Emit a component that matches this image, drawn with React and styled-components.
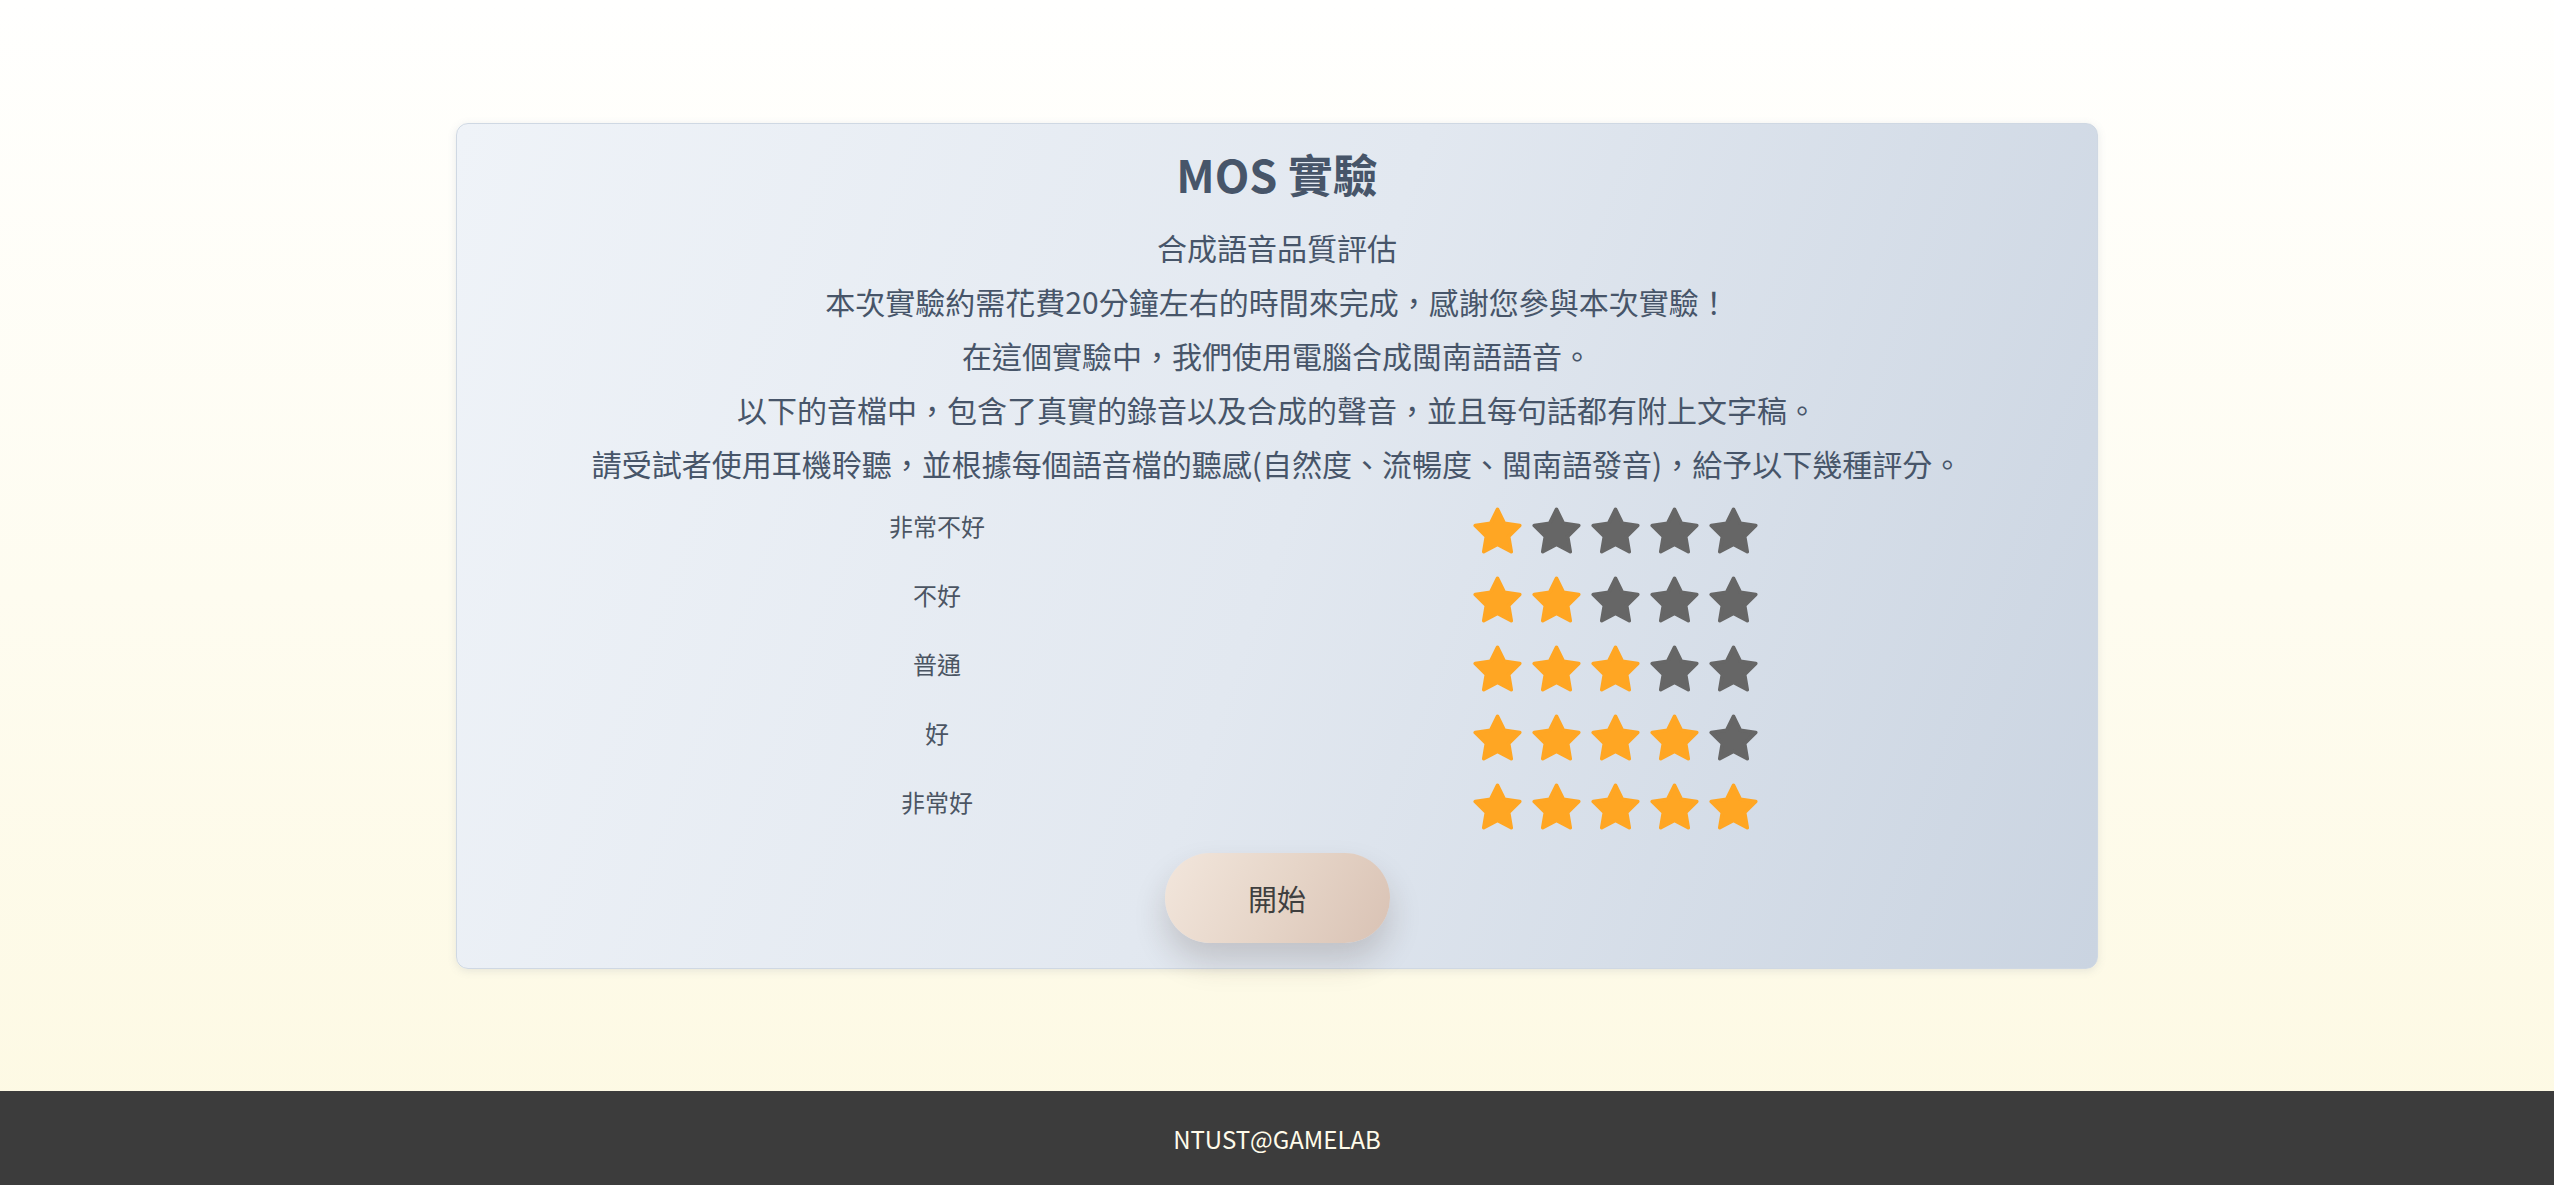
import React from "react";
import styled, { createGlobalStyle } from "styled-components";

const GlobalStyle = createGlobalStyle`
  html, body {
    margin: 0;
    padding: 0;
  }
  body {
    font-family: "Noto Sans CJK TC", "Noto Sans", sans-serif;
    background: linear-gradient(to bottom, #fffffe 0%, #fdf9e2 100%);
    min-height: 100vh;
  }
`;

const Page = styled.div`
  min-height: 100vh;
  display: flex;
  flex-direction: column;
`;

const Main = styled.main`
  flex: 1;
  display: flex;
  align-items: center;
  justify-content: center;
`;

const Card = styled.section`
  width: 1642px;
  box-sizing: border-box;
  padding: 16px 0 25px;
  display: flex;
  flex-direction: column;
  align-items: center;
  background: linear-gradient(110deg, #eff3f8 0%, #e2e8f0 50%, #cad4e1 100%);
  border: 1px solid #cfd8e3;
  border-radius: 12px;
  box-shadow: 0 2px 8px rgba(100, 116, 139, 0.15);
`;

const Title = styled.h1`
  margin: 0 0 12px;
  font-size: 45px;
  line-height: 68px;
  font-weight: 700;
  color: #475569;
`;

const Line = styled.p`
  margin: 0;
  font-size: 30px;
  line-height: 54px;
  color: #475569;
`;

const Ratings = styled.div`
  margin-top: 6px;
  width: 1360px;
  display: grid;
  grid-template-columns: 1fr 1fr;
  grid-auto-rows: 69px;
  align-items: center;
`;

const Label = styled.div`
  text-align: center;
  font-size: 24px;
  color: #4b5563;
  margin-top: -10px;
`;

const Stars = styled.div`
  display: flex;
  justify-content: center;
  gap: 10px;
  margin-left: -4px;
`;

const StartButton = styled.button`
  margin-top: 12px;
  width: 225px;
  height: 90px;
  border: none;
  border-radius: 45px;
  background: linear-gradient(120deg, #f2e6dc 0%, #e6d5c8 50%, #d9c2b4 100%);
  box-shadow: 0 18px 32px rgba(60, 40, 30, 0.18);
  font-family: inherit;
  font-size: 29px;
  color: #3f3f3f;
  cursor: pointer;
`;

const Footer = styled.footer`
  height: 94px;
  display: flex;
  align-items: center;
  justify-content: center;
  background: #3c3c3c;
  color: #fffbea;
  font-size: 24px;
`;

const Star = ({ on }) => {
  const color = on ? "#ffa623" : "#666666";
  return (
    <svg width="49" height="47" viewBox="1 1 22 21">
      <polygon
        points="12,2 15.09,8.26 22,9.27 17,14.14 18.18,21.02 12,17.77 5.82,21.02 7,14.14 2,9.27 8.91,8.26"
        fill={color}
        stroke={color}
        strokeWidth="1.6"
        strokeLinejoin="round"
      />
    </svg>
  );
};

const levels = ["非常不好", "不好", "普通", "好", "非常好"];

const lines = [
  "合成語音品質評估",
  "本次實驗約需花費20分鐘左右的時間來完成，感謝您參與本次實驗！",
  "在這個實驗中，我們使用電腦合成閩南語語音。",
  "以下的音檔中，包含了真實的錄音以及合成的聲音，並且每句話都有附上文字稿。",
  "請受試者使用耳機聆聽，並根據每個語音檔的聽感(自然度、流暢度、閩南語發音)，給予以下幾種評分。",
];

export default function App() {
  return (
    <Page>
      <GlobalStyle />
      <Main>
        <Card>
          <Title>MOS 實驗</Title>
          {lines.map((text, i) => (
            <Line key={i}>{text}</Line>
          ))}
          <Ratings>
            {levels.map((name, i) => (
              <React.Fragment key={name}>
                <Label>{name}</Label>
                <Stars>
                  {[0, 1, 2, 3, 4].map((n) => (
                    <Star key={n} on={n <= i} />
                  ))}
                </Stars>
              </React.Fragment>
            ))}
          </Ratings>
          <StartButton>開始</StartButton>
        </Card>
      </Main>
      <Footer>NTUST@GAMELAB</Footer>
    </Page>
  );
}
